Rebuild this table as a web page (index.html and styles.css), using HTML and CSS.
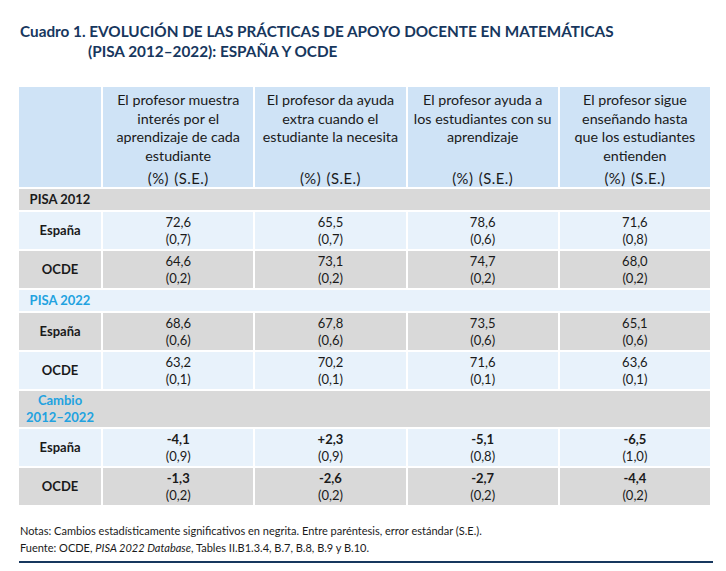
FILE: index.html
```html
<!DOCTYPE html>
<html lang="es">
<head>
<meta charset="utf-8">
<title>Cuadro 1</title>
<link rel="stylesheet" href="styles.css">
</head>
<body>
<div class="page">
  <h1 class="title"><span class="t1">Cuadro 1. EVOLUCIÓN DE LAS PRÁCTICAS DE APOYO DOCENTE EN MATEMÁTICAS</span><span class="t2">(PISA 2012–2022): ESPAÑA Y OCDE</span></h1>
  <table class="tbl">
    <colgroup><col class="c-lab"><col class="c-d"><col class="c-d"><col class="c-d"><col class="c-d"></colgroup>
    <thead>
      <tr class="head">
        <th></th>
        <th><div class="hcell"><span>El profesor muestra<br>interés por el<br>aprendizaje de cada<br>estudiante</span><span class="unit">(%) (S.E.)</span></div></th>
        <th><div class="hcell"><span>El profesor da ayuda<br>extra cuando el<br>estudiante la necesita</span><span class="unit">(%) (S.E.)</span></div></th>
        <th><div class="hcell"><span>El profesor ayuda a<br>los estudiantes con su<br>aprendizaje</span><span class="unit">(%) (S.E.)</span></div></th>
        <th><div class="hcell"><span>El profesor sigue<br>enseñando hasta<br>que los estudiantes<br>entienden</span><span class="unit">(%) (S.E.)</span></div></th>
      </tr>
    </thead>
    <tbody>
      <tr class="sec gray"><td colspan="5"><span class="seclab">PISA 2012</span></td></tr>
      <tr class="row light"><th>España</th><td>72,6<br>(0,7)</td><td>65,5<br>(0,7)</td><td>78,6<br>(0,6)</td><td>71,6<br>(0,8)</td></tr>
      <tr class="row gray"><th>OCDE</th><td>64,6<br>(0,2)</td><td>73,1<br>(0,2)</td><td>74,7<br>(0,2)</td><td>68,0<br>(0,2)</td></tr>
      <tr class="sec light"><td colspan="5"><span class="seclab blue">PISA 2022</span></td></tr>
      <tr class="row gray"><th>España</th><td>68,6<br>(0,6)</td><td>67,8<br>(0,6)</td><td>73,5<br>(0,6)</td><td>65,1<br>(0,6)</td></tr>
      <tr class="row light"><th>OCDE</th><td>63,2<br>(0,1)</td><td>70,2<br>(0,1)</td><td>71,6<br>(0,1)</td><td>63,6<br>(0,1)</td></tr>
      <tr class="sec sec2 gray"><td colspan="5"><span class="seclab blue">Cambio<br>2012–2022</span></td></tr>
      <tr class="row light"><th>España</th><td><b>-4,1</b><br>(0,9)</td><td><b>+2,3</b><br>(0,9)</td><td><b>-5,1</b><br>(0,8)</td><td><b>-6,5</b><br>(1,0)</td></tr>
      <tr class="row gray"><th>OCDE</th><td><b>-1,3</b><br>(0,2)</td><td><b>-2,6</b><br>(0,2)</td><td><b>-2,7</b><br>(0,2)</td><td><b>-4,4</b><br>(0,2)</td></tr>
    </tbody>
  </table>
  <div class="notes">
    <p>Notas: Cambios estadísticamente significativos en negrita. Entre paréntesis, error estándar (S.E.).</p>
    <p>Fuente: OCDE, <i>PISA 2022 Database</i>, Tables II.B1.3.4, B.7, B.8, B.9 y B.10.</p>
  </div>
  <div class="rule"></div>
</div>
</body>
</html>
```
FILE: styles.css
```css
html, body {
  margin: 0;
  padding: 0;
  background: #ffffff;
}
body {
  font-family: Lato, "Open Sans", "DejaVu Sans", sans-serif;
  color: #1a1a1a;
}
.page {
  padding: 21px 0 0 20px;
  width: 700px;
}
.title {
  margin: 0;
  font-size: 15.3px;
  line-height: 20px;
  font-weight: 700;
  color: #17375e;
  display: flex;
  flex-direction: column;
}
.t2 {
  padding-left: 68px;
}
.tbl {
  margin: 24px 0 0 -3px;
  border-collapse: separate;
  border-spacing: 2px;
  table-layout: fixed;
  width: 695px;
  font-size: 13px;
}
.c-lab { width: 82px; }
.c-d { width: 150px; }
.head th {
  background: #cfe3f6;
  font-weight: 400;
  height: 100px;
  padding: 0;
  vertical-align: top;
}
.hcell {
  height: 100px;
  display: flex;
  flex-direction: column;
  justify-content: space-between;
  align-items: center;
  text-align: center;
  font-size: 14.3px;
  line-height: 18.5px;
  white-space: nowrap;
  padding: 4px 0 0;
  box-sizing: border-box;
}
.unit {
  font-size: 14.8px;
  letter-spacing: 0.5px;
  word-spacing: 1px;
}
.gray > * { background: #d9d9d9; }
.light > * { background: #e8f2fb; }
.sec td {
  height: 21px;
  padding: 0;
  vertical-align: middle;
}
.sec2 td { height: 36px; }
.seclab {
  display: block;
  width: 82px;
  text-align: center;
  font-weight: 700;
  line-height: 17px;
  color: #1a1a1a;
}
.seclab.blue { color: #22a2e0; }
.row th, .row td {
  height: 37px;
  padding: 0;
  text-align: center;
  vertical-align: middle;
  line-height: 17px;
}
.row th { font-weight: 700; }
.notes {
  margin-top: 15px;
  font-size: 11px;
  line-height: 17px;
}
.notes p { margin: 0; }
.rule {
  margin: 5px 0 0 -1px;
  width: 694px;
  height: 2px;
  background: #17375e;
}
```
